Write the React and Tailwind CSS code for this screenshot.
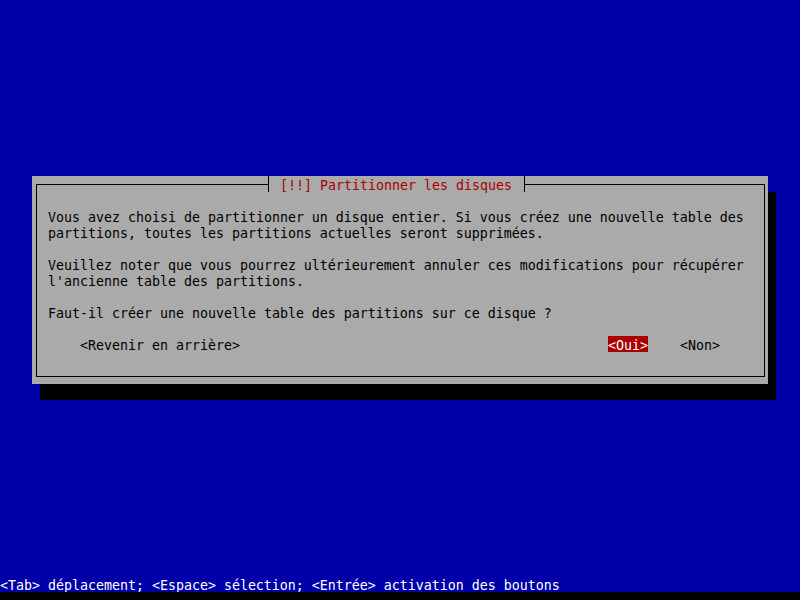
const mono = "font-['DejaVu_Sans_Mono',monospace] text-[13.29px] leading-[20px] whitespace-pre"

const lines = [
  'Vous avez choisi de partitionner un disque entier. Si vous créez une nouvelle table des',
  'partitions, toutes les partitions actuelles seront supprimées.',
  '',
  'Veuillez noter que vous pourrez ultérieurement annuler ces modifications pour récupérer',
  "l'ancienne table des partitions.",
  '',
  'Faut-il créer une nouvelle table des partitions sur ce disque ?',
]

const App = () => {
  return (
    <div className={`w-[800px] h-[600px] bg-[#0000a8] flex flex-col ${mono}`}>
      <div className="h-[176px] shrink-0" />

      {/* dialog with hard shadow */}
      <div className="ml-[32px] w-[736px] h-[208px] shrink-0 bg-[#aaaaaa] shadow-[8px_16px_0_0_#000] flex flex-col">
        {/* top border + title */}
        <div className="flex h-4 pl-[4px]">
          <div className="mt-[8px] h-[8px] w-[232px] border-t border-l border-black" />
          <div className="w-px h-4 bg-black" />
          <div className="w-[11px]" />
          <div className="w-[232px] h-4 text-[#aa0000]">[!!] Partitionner les disques</div>
          <div className="w-[12px]" />
          <div className="w-px h-4 bg-black" />
          <div className="mt-[8px] h-[8px] w-[240px] border-t border-r border-black" />
        </div>

        {/* body */}
        <div className="ml-[4px] w-[729px] h-[185px] border-l border-r border-b border-black pt-4 pl-[11px] text-black">
          {lines.map((l, i) => (
            <div key={i} className="h-4">{l}</div>
          ))}
          <div className="h-4" />
          <div className="flex h-4">
            <span className="ml-[32px] h-4">{'<Revenir en arrière>'}</span>
            <span className="ml-[368px] h-4 bg-[#aa0000] text-[#ffffff]">{'<Oui>'}</span>
            <span className="ml-[32px] h-4">{'<Non>'}</span>
          </div>
        </div>
      </div>

      <div className="flex-1" />
      <div className="h-4 shrink-0 text-white">
        {'<Tab> déplacement; <Espace> sélection; <Entrée> activation des boutons'}
      </div>
      <div className="h-[8px] shrink-0 bg-black" />
    </div>
  )
}

export default App
